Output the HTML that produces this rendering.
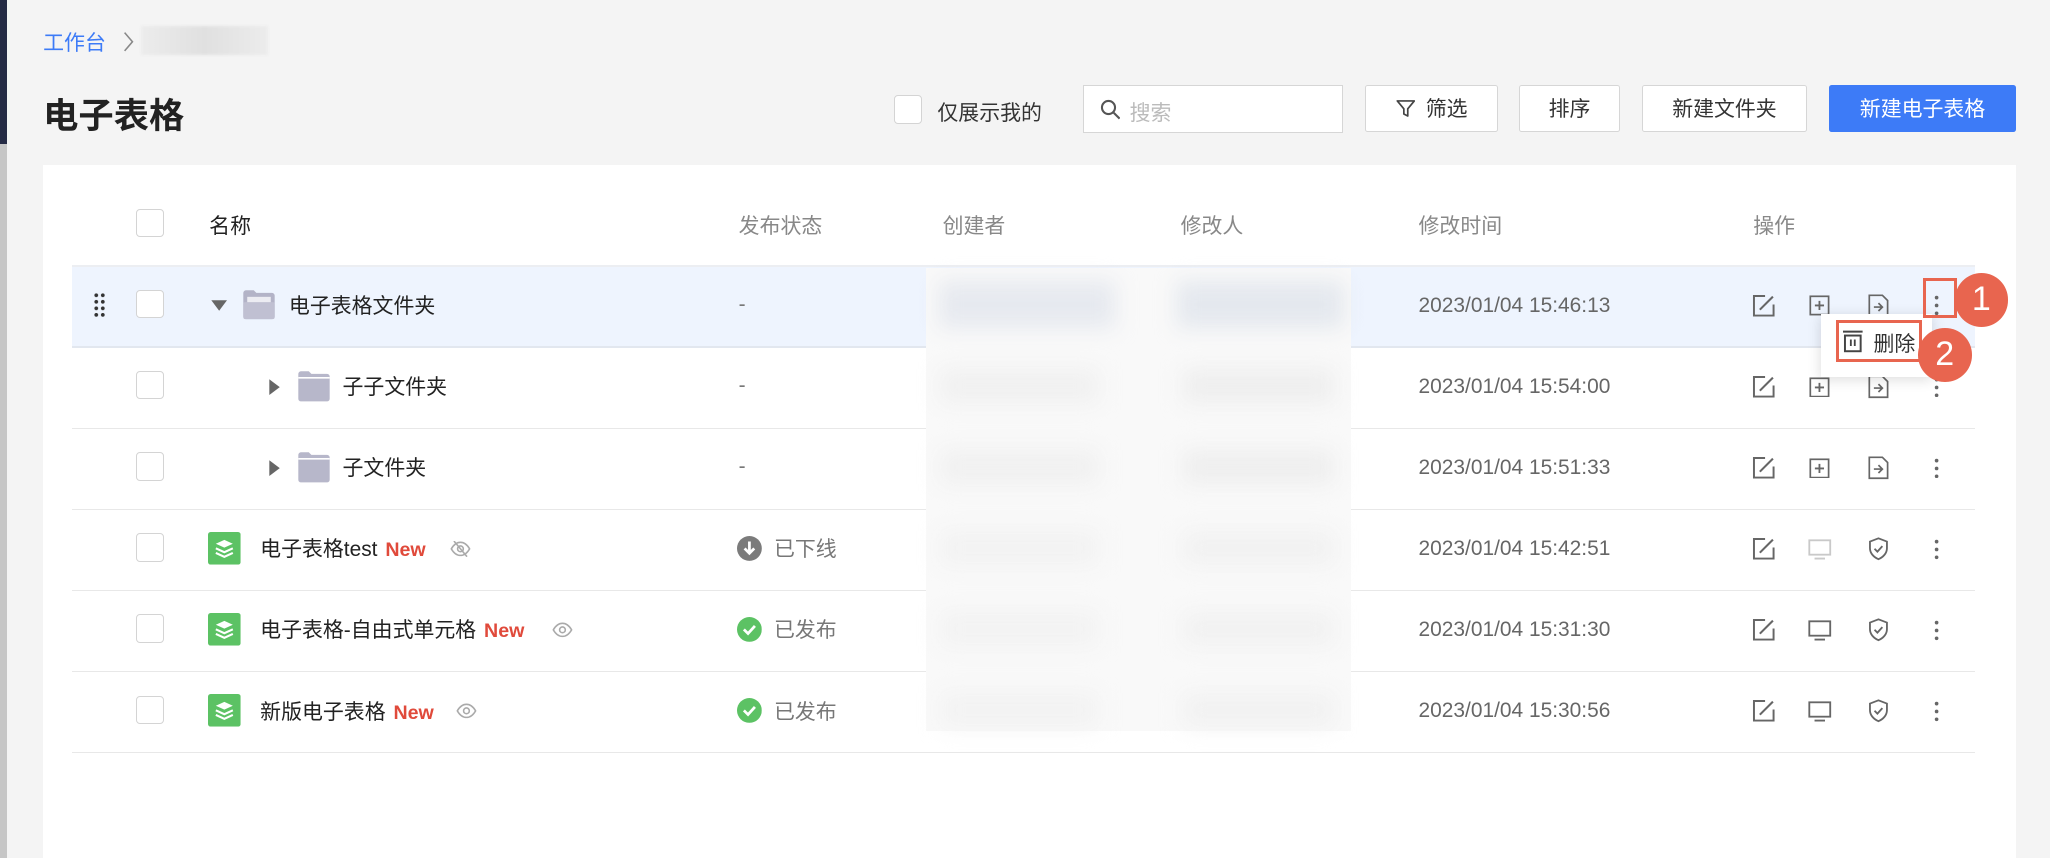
<!DOCTYPE html>
<html><head><meta charset="utf-8">
<style>
html,body{margin:0;padding:0;width:2050px;height:858px;overflow:hidden;background:#f4f4f4;}
#w{zoom:1.30740;width:1568px;height:657px;position:relative;font-family:"Liberation Sans","Noto Sans CJK SC",sans-serif;color:#222;}
.a{position:absolute;}
.cb{position:absolute;width:20px;height:20px;border:1px solid #d4d4d4;border-radius:3px;background:#fff;}
.btn{position:absolute;top:65px;height:36px;border:1px solid #d6d6d6;background:#fff;border-radius:2px;font-size:16px;line-height:36px;text-align:center;color:#333;box-sizing:border-box;}
.hd{position:absolute;top:161px;font-size:16px;color:#888;}
.line{position:absolute;left:55px;width:1456px;height:1px;background:#e8e8e8;}
.t{position:absolute;font-size:16px;color:#222;}
.time{position:absolute;left:1085px;font-size:16px;color:#666;}
.st{position:absolute;left:592px;font-size:16px;color:#777;}
.new{color:#e04a3b;font-weight:bold;font-size:15px;margin-left:6px;}
.ic{position:absolute;}
</style></head><body><div id="w">
<div class="a" style="left:0;top:0;width:5px;height:110px;background:#252b45"></div>
<div class="a" style="left:0;top:110px;width:5px;height:547px;background:#c6c6c6"></div>
<div class="a" style="left:33px;top:21px;font-size:16px;color:#3d7bf7">工作台</div>
<svg class="a" style="left:93px;top:23px" width="10" height="18" viewBox="0 0 10 18"><path d="M2 2l6 7-6 7" fill="none" stroke="#888" stroke-width="1.2"/></svg>
<div class="a" style="left:108px;top:20px;width:97px;height:22px;background:linear-gradient(90deg,#ececec,#e0e0e0,#ececec);filter:blur(1px)"></div>
<div class="a" style="left:33px;top:67px;font-size:27px;font-weight:bold;color:#222">电子表格</div>
<div class="cb" style="left:684px;top:73px;"></div>
<div class="a" style="left:717px;top:74px;font-size:16px;color:#333">仅展示我的</div>
<div class="a" style="left:828px;top:65px;width:199px;height:37px;border:1px solid #d6d6d6;background:#fff;box-sizing:border-box"></div>
<svg class="a" style="left:841px;top:76px" width="16" height="16" viewBox="0 0 16 16"><circle cx="6.5" cy="6.5" r="5" fill="none" stroke="#555" stroke-width="1.6"/><path d="M10.5 10.5 15 15" stroke="#555" stroke-width="1.6"/></svg>
<div class="a" style="left:864px;top:74px;font-size:16px;color:#bbb">搜索</div>
<div class="btn" style="left:1044px;width:102px;"><svg style="vertical-align:-2px;margin-right:8px" width="15" height="15" viewBox="0 0 15 15"><path d="M1 1.5h13l-5 6v5.5l-3-1.5v-4z" fill="none" stroke="#444" stroke-width="1.3" stroke-linejoin="round"/></svg>筛选</div>
<div class="btn" style="left:1162px;width:77px;">排序</div>
<div class="btn" style="left:1256px;width:126px;">新建文件夹</div>
<div class="btn" style="left:1399px;width:143px;background:#3d7bf7;border-color:#3d7bf7;color:#fff">新建电子表格</div>

<div class="a" style="left:33px;top:126px;width:1509px;height:531px;background:#fff"></div>
<div class="cb" style="left:104px;top:160px;"></div>
<div class="hd" style="left:160px;color:#222">名称</div>
<div class="hd" style="left:565px">发布状态</div>
<div class="hd" style="left:721px">创建者</div>
<div class="hd" style="left:903px">修改人</div>
<div class="hd" style="left:1085px">修改时间</div>
<div class="hd" style="left:1341px">操作</div>

<div class="a" style="left:55px;top:203px;width:1456px;height:62px;background:#eef4fe"></div>
<div class="line" style="top:203px;background:#eceef2"></div>
<div class="line" style="top:265px;background:#e2e7ef"></div>
<div class="line" style="top:327px"></div>
<div class="line" style="top:389px"></div>
<div class="line" style="top:451px"></div>
<div class="line" style="top:513px"></div>
<div class="line" style="top:575px"></div>

<!-- blur -->
<div class="a" style="left:708px;top:205px;width:325px;height:354px;background:#f9f9f9"></div>
<div class="a" style="left:718px;top:215px;width:135px;height:36px;background:#e6e9ef;filter:blur(8px)"></div>
<div class="a" style="left:900px;top:215px;width:128px;height:36px;background:#e4e8ee;filter:blur(8px)"></div>
<div class="a" style="left:720px;top:282px;width:120px;height:26px;background:#f0f0f0;filter:blur(8px)"></div>
<div class="a" style="left:905px;top:282px;width:115px;height:26px;background:#eeeeee;filter:blur(8px)"></div>
<div class="a" style="left:720px;top:344px;width:120px;height:26px;background:#f0f0f0;filter:blur(8px)"></div>
<div class="a" style="left:905px;top:344px;width:115px;height:26px;background:#eeeeee;filter:blur(8px)"></div>
<div class="a" style="left:720px;top:406px;width:120px;height:26px;background:#f2f2f2;filter:blur(8px)"></div>
<div class="a" style="left:905px;top:406px;width:115px;height:26px;background:#f1f1f1;filter:blur(8px)"></div>
<div class="a" style="left:720px;top:468px;width:120px;height:26px;background:#f2f2f2;filter:blur(8px)"></div>
<div class="a" style="left:905px;top:468px;width:115px;height:26px;background:#f1f1f1;filter:blur(8px)"></div>
<div class="a" style="left:720px;top:530px;width:120px;height:26px;background:#f2f2f2;filter:blur(8px)"></div>
<div class="a" style="left:905px;top:530px;width:115px;height:26px;background:#f1f1f1;filter:blur(8px)"></div>

<!-- row 1 -->
<div class="a" style="left:71px;top:223px;width:10px;height:20px;background:radial-gradient(circle,#333 1.3px,transparent 1.6px) 0 0/5px 5px"></div>
<div class="cb" style="left:104px;top:222px;"></div>
<svg class="ic" style="left:161px;top:229px" width="14" height="10"><path d="M1 1h12L7 9z" fill="#666"/></svg>
<svg class="ic" style="left:185px;top:221px" width="26" height="24" viewBox="0 0 26 24"><path d="M1 3a2 2 0 0 1 2-2h6l2 2h12a2 2 0 0 1 2 2v16a2 2 0 0 1-2 2H3a2 2 0 0 1-2-2z" fill="#b3b3c7"/><rect x="4" y="6" width="18" height="7" fill="#ececf2"/><rect x="1" y="10" width="24" height="13" rx="1.5" fill="#c0c0d2"/></svg>
<div class="t" style="left:221px;top:222px">电子表格文件夹</div>
<div class="st" style="left:565px;top:224px">-</div>
<div class="time" style="top:225px">2023/01/04 15:46:13</div>

<!-- row 2 -->
<div class="cb" style="left:104px;top:284px;"></div>
<svg class="ic" style="left:205px;top:289px" width="10" height="14"><path d="M1 1v12l8-6z" fill="#666"/></svg>
<svg class="ic" style="left:227px;top:283px" width="26" height="25" viewBox="0 0 26 25"><path d="M1 3a2 2 0 0 1 2-2h6l2 2h12a2 2 0 0 1 2 2v17a2 2 0 0 1-2 2H3a2 2 0 0 1-2-2z" fill="#b7b7ca"/><path d="M1 6h24" stroke="#fff" stroke-width="1.2"/></svg>
<div class="t" style="left:262px;top:284px">子子文件夹</div>
<div class="st" style="left:565px;top:286px">-</div>
<div class="time" style="top:287px">2023/01/04 15:54:00</div>

<!-- row 3 -->
<div class="cb" style="left:104px;top:346px;"></div>
<svg class="ic" style="left:205px;top:351px" width="10" height="14"><path d="M1 1v12l8-6z" fill="#666"/></svg>
<svg class="ic" style="left:227px;top:345px" width="26" height="25" viewBox="0 0 26 25"><path d="M1 3a2 2 0 0 1 2-2h6l2 2h12a2 2 0 0 1 2 2v17a2 2 0 0 1-2 2H3a2 2 0 0 1-2-2z" fill="#b7b7ca"/><path d="M1 6h24" stroke="#fff" stroke-width="1.2"/></svg>
<div class="t" style="left:262px;top:346px">子文件夹</div>
<div class="st" style="left:565px;top:348px">-</div>
<div class="time" style="top:349px">2023/01/04 15:51:33</div>

<!-- sheet rows -->
<svg width="0" height="0" style="position:absolute"><defs><symbol id="sh" viewBox="0 0 25 25"><rect width="25" height="25" rx="2" fill="#5cc264"/><path d="M6 9l6.5-3 6.5 3-6.5 3z" fill="#fff"/><path d="M6 12.5l6.5 3 6.5-3M6 16l6.5 3 6.5-3" fill="none" stroke="#fff" stroke-width="1.6"/></symbol>
<symbol id="eye" viewBox="0 0 16 12"><path d="M1 6c2-3.5 4.5-5 7-5s5 1.5 7 5c-2 3.5-4.5 5-7 5S3 9.5 1 6z" fill="none" stroke="#aaa" stroke-width="1.2"/><circle cx="8" cy="6" r="2.2" fill="none" stroke="#aaa" stroke-width="1.2"/></symbol>
<symbol id="ok" viewBox="0 0 18 18"><circle cx="9" cy="9" r="9" fill="#5cc264"/><path d="M5 9l3 3 5-5.5" fill="none" stroke="#fff" stroke-width="2"/></symbol>
<symbol id="ed" viewBox="0 0 18 18"><path d="M10 1.5H1.5v15h15V8" fill="none" stroke="#666" stroke-width="1.5"/><path d="M6 12L16 2" stroke="#666" stroke-width="1.6"/></symbol>
<symbol id="pl" viewBox="0 0 16 16"><rect x="1" y="1" width="14" height="14" fill="none" stroke="#666" stroke-width="1.3"/><path d="M8 4.5v7M4.5 8h7" stroke="#666" stroke-width="1.4"/></symbol>
<symbol id="mv" viewBox="0 0 16 18"><path d="M1 1h10l4 4v12H1z" fill="none" stroke="#666" stroke-width="1.3"/><path d="M4.5 10h6M8 7l3 3-3 3" fill="none" stroke="#666" stroke-width="1.3"/></symbol>
<symbol id="mon" viewBox="0 0 18 16"><rect x="1" y="1" width="16" height="11" fill="none" stroke="#666" stroke-width="1.4"/><path d="M5 15h8" stroke="#666" stroke-width="1.4"/></symbol>
<symbol id="shd" viewBox="0 0 16 18"><path d="M8 1l6.5 2.5v5c0 4-3 7-6.5 8.5C4.5 15.5 1.5 12.5 1.5 8.5v-5z" fill="none" stroke="#666" stroke-width="1.4"/><path d="M5 9l2.2 2.2L11 7" fill="none" stroke="#666" stroke-width="1.4"/></symbol>
<symbol id="dot" viewBox="0 0 4 16"><circle cx="2" cy="2" r="1.4" fill="#666"/><circle cx="2" cy="8" r="1.4" fill="#666"/><circle cx="2" cy="14" r="1.4" fill="#666"/></symbol>
</defs></svg>

<div class="cb" style="left:104px;top:408px;"></div>
<svg class="ic" style="left:159px;top:407px" width="25" height="25"><use href="#sh"/></svg>
<div class="t" style="left:199px;top:408px">电子表格test<span class="new">New</span></div>
<svg class="ic" style="left:344px;top:414px" width="16" height="12"><use href="#eye"/><path d="M3 0l10 12" stroke="#aaa" stroke-width="1.2"/></svg>
<svg class="ic" style="left:564px;top:410px" width="19" height="19" viewBox="0 0 18 18"><circle cx="9" cy="9" r="9" fill="#7b7b7b"/><path d="M9 4v8M5.5 9L9 12.5 12.5 9" fill="none" stroke="#fff" stroke-width="2"/></svg>
<div class="st" style="top:408px">已下线</div>
<div class="time" style="top:411px">2023/01/04 15:42:51</div>

<div class="cb" style="left:104px;top:470px;"></div>
<svg class="ic" style="left:159px;top:469px" width="25" height="25"><use href="#sh"/></svg>
<div class="t" style="left:199px;top:470px">电子表格-自由式单元格<span class="new">New</span></div>
<svg class="ic" style="left:422px;top:476px" width="16" height="12"><use href="#eye"/></svg>
<svg class="ic" style="left:564px;top:472px" width="19" height="19"><use href="#ok"/></svg>
<div class="st" style="top:470px">已发布</div>
<div class="time" style="top:473px">2023/01/04 15:31:30</div>

<div class="cb" style="left:104px;top:532px;"></div>
<svg class="ic" style="left:159px;top:531px" width="25" height="25"><use href="#sh"/></svg>
<div class="t" style="left:199px;top:532px">新版电子表格<span class="new">New</span></div>
<svg class="ic" style="left:349px;top:538px" width="16" height="12"><use href="#eye"/></svg>
<svg class="ic" style="left:564px;top:534px" width="19" height="19"><use href="#ok"/></svg>
<div class="st" style="top:532px">已发布</div>
<div class="time" style="top:535px">2023/01/04 15:30:56</div>

<!-- action icons -->
<svg class="ic" style="left:1340px;top:225px" width="18" height="18"><use href="#ed"/></svg>
<svg class="ic" style="left:1384px;top:226px" width="16" height="16"><use href="#pl"/></svg>
<svg class="ic" style="left:1429px;top:225px" width="16" height="18"><use href="#mv"/></svg>
<svg class="ic" style="left:1479px;top:226px" width="4" height="16"><use href="#dot"/></svg>

<svg class="ic" style="left:1340px;top:287px" width="18" height="18"><use href="#ed"/></svg>
<svg class="ic" style="left:1384px;top:288px" width="16" height="16"><use href="#pl"/></svg>
<svg class="ic" style="left:1429px;top:287px" width="16" height="18"><use href="#mv"/></svg>
<svg class="ic" style="left:1479px;top:288px" width="4" height="16"><use href="#dot"/></svg>

<svg class="ic" style="left:1340px;top:349px" width="18" height="18"><use href="#ed"/></svg>
<svg class="ic" style="left:1384px;top:350px" width="16" height="16"><use href="#pl"/></svg>
<svg class="ic" style="left:1429px;top:349px" width="16" height="18"><use href="#mv"/></svg>
<svg class="ic" style="left:1479px;top:350px" width="4" height="16"><use href="#dot"/></svg>

<svg class="ic" style="left:1340px;top:411px" width="18" height="18"><use href="#ed"/></svg>
<svg class="ic" style="left:1383px;top:412px;opacity:.35" width="18" height="16"><use href="#mon"/></svg>
<svg class="ic" style="left:1429px;top:411px" width="16" height="18"><use href="#shd"/></svg>
<svg class="ic" style="left:1479px;top:412px" width="4" height="16"><use href="#dot"/></svg>

<svg class="ic" style="left:1340px;top:473px" width="18" height="18"><use href="#ed"/></svg>
<svg class="ic" style="left:1383px;top:474px" width="18" height="16"><use href="#mon"/></svg>
<svg class="ic" style="left:1429px;top:473px" width="16" height="18"><use href="#shd"/></svg>
<svg class="ic" style="left:1479px;top:474px" width="4" height="16"><use href="#dot"/></svg>

<svg class="ic" style="left:1340px;top:535px" width="18" height="18"><use href="#ed"/></svg>
<svg class="ic" style="left:1383px;top:536px" width="18" height="16"><use href="#mon"/></svg>
<svg class="ic" style="left:1429px;top:535px" width="16" height="18"><use href="#shd"/></svg>
<svg class="ic" style="left:1479px;top:536px" width="4" height="16"><use href="#dot"/></svg>

<!-- popup -->
<div class="a" style="left:1393px;top:240px;width:85px;height:48px;background:#fff;box-shadow:0 2px 10px rgba(0,0,0,.15)"></div>
<svg class="ic" style="left:1410px;top:252px" width="15" height="18" viewBox="0 0 15 18"><path d="M0 2h15" stroke="#444" stroke-width="1.5"/><rect x="1.5" y="5" width="12" height="12" fill="none" stroke="#444" stroke-width="1.5"/><path d="M6 8v5M9 8v5" stroke="#444" stroke-width="1.4"/></svg>
<div class="a" style="left:1433px;top:251px;font-size:16px;color:#333">删除</div>
<div class="a" style="left:1471px;top:213px;width:26px;height:30px;border:3px solid #e8654f;box-sizing:border-box"></div>
<div class="a" style="left:1404px;top:245px;width:66px;height:32px;border:3px solid #e8654f;box-sizing:border-box"></div>
<div class="a" style="left:1495px;top:209px;width:41px;height:41px;border-radius:50%;background:#e8654f;color:#fff;font-size:26px;line-height:41px;text-align:center">1</div>
<div class="a" style="left:1467px;top:251px;width:41px;height:41px;border-radius:50%;background:#e8654f;color:#fff;font-size:26px;line-height:41px;text-align:center">2</div>
</div></body></html>
